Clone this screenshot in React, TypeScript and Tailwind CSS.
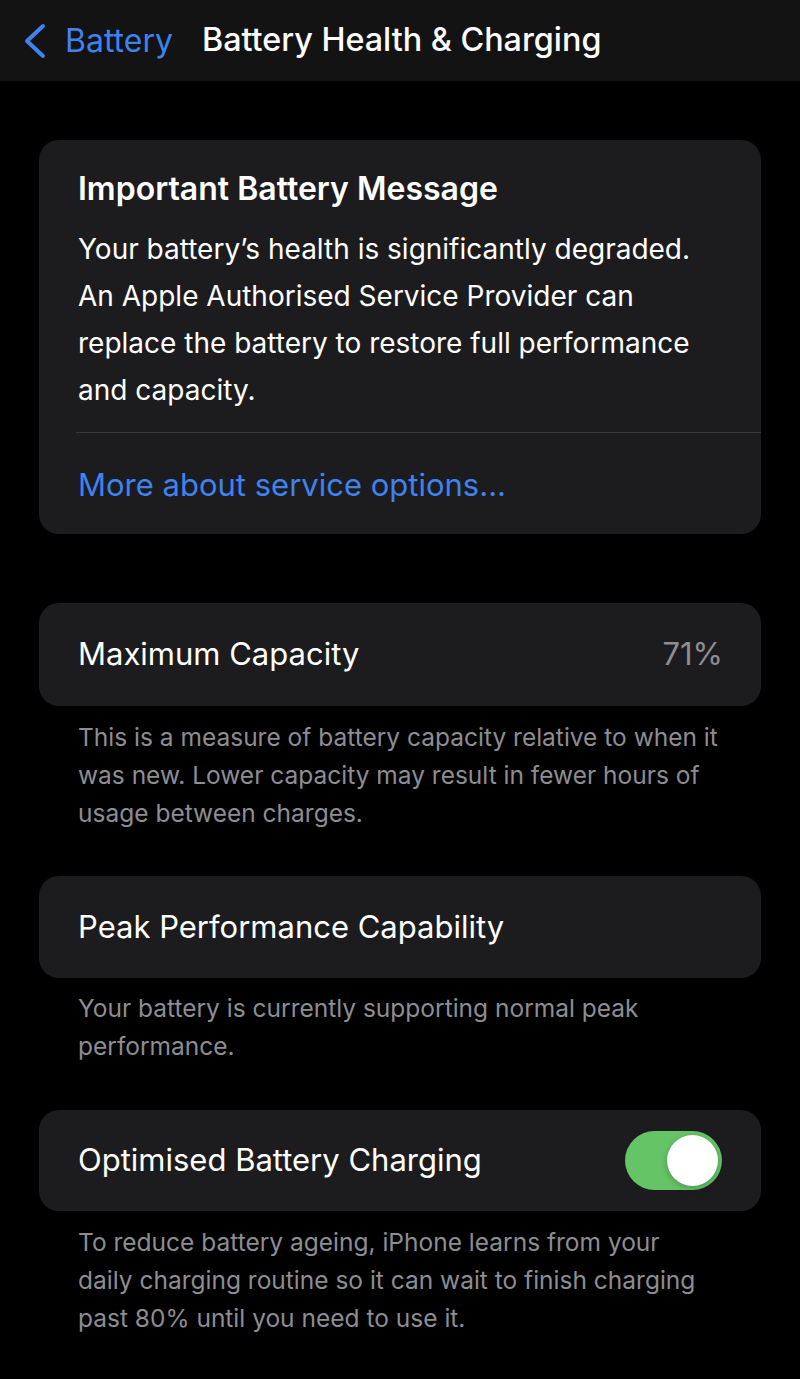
const font = { fontFamily: "Inter, 'Noto Sans', sans-serif" };

const Card = ({ children }: { children: React.ReactNode }) => (
  <div className="bg-[#1c1c1e] rounded-[20px] mx-[39px]">{children}</div>
);

const Footer = ({ pt, children }: { pt: string; children: React.ReactNode }) => (
  <p className={`px-[78px] ${pt} text-[24.5px] leading-[38px] text-[#8d8d92]`}>{children}</p>
);

export default function App() {
  return (
    <div className="w-[800px] h-[1379px] bg-black text-white overflow-hidden" style={font}>
      {/* nav bar */}
      <header className="h-[81px] bg-[#131313] flex items-center">
        <svg width="24" height="38" viewBox="0 0 24 38" className="ml-[23px] mt-[1px]">
          <polyline points="20,4 4,19 20,34" fill="none" stroke="#3f82f0" strokeWidth="4" strokeLinecap="round" strokeLinejoin="round" />
        </svg>
        <span className="text-[32px] text-[#3f82f0] ml-[18px]">Battery</span>
        <span className="text-[32.3px] font-medium ml-[29px]">Battery Health &amp; Charging</span>
      </header>

      <div className="pt-[59px]">
        <Card>
          <div className="px-[39px] pt-[30px]">
            <h2 className="text-[32px] font-semibold leading-[38px]">Important Battery Message</h2>
            <p className="mt-[18px] text-[28px] leading-[47px]">
              Your battery’s health is significantly degraded.
              <br />
              An Apple Authorised Service Provider can
              <br />
              replace the battery to restore full performance
              <br />
              and capacity.
            </p>
          </div>
          <div className="ml-[37px] mt-[18px] border-t border-[#38383a]" />
          <div className="px-[39px] pt-[33px] pb-[30px] text-[31px] leading-[38px] text-[#3f82f0]">
            More about service options...
          </div>
        </Card>

        <div className="h-[69px]" />
        <Card>
          <div className="h-[103px] pl-[39px] pr-[38px] flex items-center justify-between text-[31px]">
            <span>Maximum Capacity</span>
            <span className="text-[#8d8d92]">71%</span>
          </div>
        </Card>
        <Footer pt="pt-[12px]">
          This is a measure of battery capacity relative to when it
          <br />
          was new. Lower capacity may result in fewer hours of
          <br />
          usage between charges.
        </Footer>

        <div className="h-[44px]" />
        <Card>
          <div className="h-[102px] px-[39px] flex items-center text-[31px]">
            <span>Peak Performance Capability</span>
          </div>
        </Card>
        <Footer pt="pt-[11px]">
          Your battery is currently supporting normal peak
          <br />
          performance.
        </Footer>

        <div className="h-[45px]" />
        <Card>
          <div className="h-[101px] px-[39px] flex items-center justify-between text-[31px]">
            <span>Optimised Battery Charging</span>
            <div className="w-[97px] h-[59px] rounded-full bg-[#65c466] p-[4px] flex justify-end">
              <div className="w-[51px] h-[51px] rounded-full bg-white shadow-[0_2px_6px_rgba(0,0,0,0.25)]" />
            </div>
          </div>
        </Card>
        <Footer pt="pt-[12px]">
          To reduce battery ageing, iPhone learns from your
          <br />
          daily charging routine so it can wait to finish charging
          <br />
          past 80% until you need to use it.
        </Footer>
      </div>
    </div>
  );
}
